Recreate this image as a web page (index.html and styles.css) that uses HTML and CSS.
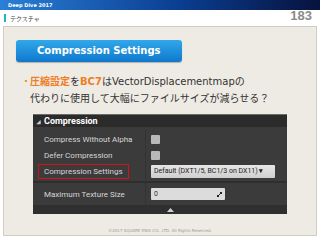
FILE: index.html
```html
<!DOCTYPE html>
<html lang="ja">
<head>
    <meta charset="UTF-8">
    <title>183 テクスチャ</title>
    <link rel="stylesheet" href="styles.css">
</head>
<body>
    <div class="topbar">Deep Dive 2017</div>
    <div class="titlebar">
        <span class="marker"></span>
        <span class="section">テクスチャ</span>
        <span class="page-no">183</span>
    </div>

    <div class="panel">
        <div class="pill">Compression Settings</div>

        <p class="bullet">
            <span class="dot">・</span><span><em>圧縮設定</em>を<em>BC7</em>はVectorDisplacementmapの<br>代わりに使用して大幅にファイルサイズが減らせる？</span>
        </p>

        <div class="ue">
            <div class="ue-head"><span class="tri">◢</span>Compression</div>
            <div class="ue-body">
                <div class="ue-row">
                    <div class="ue-label">Compress Without Alpha</div>
                    <div class="ue-value"><span class="check"></span></div>
                </div>
                <div class="ue-row">
                    <div class="ue-label">Defer Compression</div>
                    <div class="ue-value"><span class="check"></span></div>
                </div>
                <div class="ue-row">
                    <div class="ue-label"><span class="hl">Compression Settings</span></div>
                    <div class="ue-value"><span class="combo">Default (DXT1/5, BC1/3 on DX11) <b>▾</b></span></div>
                </div>
                <div class="ue-row tall">
                    <div class="ue-label">Maximum Texture Size</div>
                    <div class="ue-value">
                        <span class="num">0
                            <svg width="5" height="5" viewBox="0 0 5 5"><path d="M0 5 L2 5 L0 3 Z M5 0 L3 0 L5 2 Z M1 4 L4 1" stroke="#222" stroke-width="1" fill="#222"/></svg>
                        </span>
                    </div>
                </div>
            </div>
            <div class="ue-foot"><svg width="7" height="4" viewBox="0 0 7 4"><path d="M0 4 L3.5 0 L7 4 Z" fill="#cfcfcf"/></svg></div>
        </div>

        <div class="copy">©2017 SQUARE ENIX CO., LTD. All Rights Reserved.</div>
    </div>
</body>
</html>
```

FILE: styles.css
```css
body { margin: 0; width: 320px; height: 240px; background: #fff; font-family: "DejaVu Sans", "Noto Sans CJK JP", sans-serif; overflow: hidden; }

.topbar { height: 10px; padding-left: 8px; background: linear-gradient(to right, #2a7fd6, #0b3f93 55%, #07123d); color: #fff; font-size: 5px; font-weight: bold; line-height: 10px; }

.titlebar { height: 16px; display: flex; align-items: center; position: relative; }
.marker { width: 2px; height: 8px; margin: 0 4px 0 4px; background: #19b4c8; }
.section { font-size: 6px; color: #444; font-family: "Noto Sans CJK JP", sans-serif; }
.page-no { position: absolute; right: 8px; top: -2px; font-family: "Liberation Sans", sans-serif; font-size: 13px; font-weight: bold; color: #8a8a8a; }

.panel { margin: 0 3px; height: 210px; box-sizing: border-box; border: 1px solid #d2cdc3; background: #eeebe4; padding: 13px 0 0 12px; }

.pill { width: 166px; height: 22px; box-sizing: border-box; border-radius: 3px; background: linear-gradient(to bottom, #31a8ea, #0f78cd); box-shadow: 0 1px 1px rgba(0,0,0,0.25); color: #fff; font-size: 10px; font-weight: bold; line-height: 22px; padding-left: 21px; }

.bullet { margin: 11px 0 0 5px; display: flex; font-size: 10px; line-height: 17px; color: #333; font-family: "DejaVu Sans", "Noto Sans CJK JP", sans-serif; }
.bullet .dot { color: #f08020; width: 9px; }
.bullet em { font-style: normal; font-weight: bold; color: #f07d1e; }

.ue { margin: 7px 0 0 17px; width: 254px; background: #3b3b3b; font-family: Roboto, sans-serif; color: #d6d6d6; font-size: 8px; }
.ue-head { height: 12px; border-top: 1px solid #6a6a6a; background: #2b2b2b; color: #fff; font-size: 9px; font-weight: bold; line-height: 12px; padding-left: 3px; }
.ue-head .tri { font-size: 5px; margin-right: 3px; color: #ccc; }
.ue-body { padding-top: 4px; }
.ue-row { display: flex; height: 16px; }
.ue-row.tall { height: 22px; border-top: 2px solid #2e2e2e; margin-top: 2px; }
.ue-label { width: 113px; padding-left: 11px; box-sizing: border-box; display: flex; align-items: center; border-right: 1px solid #333; }
.ue-value { flex: 1; display: flex; align-items: center; padding-left: 5px; }
.check { width: 9px; height: 9px; background: #b9b9b9; border-radius: 1px; }
.hl { border: 1px solid #d0141c; margin-left: -6px; padding: 2px 5px; }
.combo { height: 13px; width: 124px; box-sizing: border-box; background: linear-gradient(#e6e6e6, #cfcfcf); color: #222; font-size: 7px; line-height: 13px; padding-left: 3px; border-radius: 1px; }
.combo b { font-size: 7px; }
.num { height: 12px; width: 74px; box-sizing: border-box; background: #dcdcdc; color: #333; font-size: 7px; line-height: 12px; padding: 0 3px; display: flex; justify-content: space-between; align-items: center; border-radius: 1px; }
.ue-foot { height: 9px; background: #2f2f2f; display: flex; justify-content: center; align-items: center; padding-left: 20px; }

.copy { margin-top: 14px; margin-left: -12px; text-align: center; font-size: 4px; color: #999; }
```
